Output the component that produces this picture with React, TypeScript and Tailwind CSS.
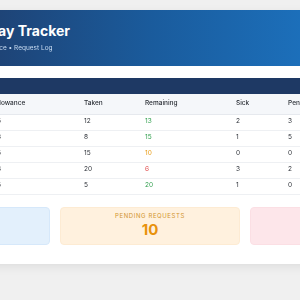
import React from 'react';

type Row = {
  name: string;
  allowance: number;
  taken: number;
  remaining: number;
  sick: number;
  pending: number;
  status: string;
};

const rows: Row[] = [
  { name: 'Sarah Johnson', allowance: 25, taken: 12, remaining: 13, sick: 2, pending: 3, status: 'Active' },
  { name: 'Michael Chen', allowance: 23, taken: 8, remaining: 15, sick: 1, pending: 5, status: 'Active' },
  { name: 'Emma Williams', allowance: 25, taken: 15, remaining: 10, sick: 0, pending: 0, status: 'Active' },
  { name: 'James Brown', allowance: 26, taken: 20, remaining: 6, sick: 3, pending: 2, status: 'Low' },
  { name: 'Olivia Davis', allowance: 25, taken: 5, remaining: 20, sick: 1, pending: 0, status: 'Active' },
];

function remainingColor(n: number) {
  if (n <= 6) return 'text-[#e04848]';
  if (n <= 10) return 'text-[#e89a12]';
  return 'text-[#2f9e4c]';
}

export default function App() {
  return (
    <div
      className="min-h-screen bg-[#f0f0f0] pt-[10px] overflow-hidden flex justify-center antialiased"
      style={{ fontFamily: 'Inter, "Noto Sans", sans-serif' }}
    >
      <div className="w-[600px] shrink-0 self-start bg-white rounded-[6px] overflow-hidden shadow-[0_3px_10px_rgba(0,0,0,0.08)]">
        {/* header */}
        <header className="h-[56px] pl-[4px] flex flex-col justify-center gap-[6px] bg-[linear-gradient(90deg,#1d2d5a_0%,#1e4477_25%,#1a5b9c_50%,#1c6fba_75%,#2083d4_100%)]">
          <h1 className="text-[14px] font-bold leading-none text-white">Annual Leave &amp; Holiday Tracker</h1>
          <p className="will-change-transform text-[6.5px] leading-[8px] text-[#c9dcf2]">
            Track team holidays, leave, sick days &amp; allowance • Request Log
          </p>
        </header>

        <div className="px-[10px] pt-[12px] pb-[19px]">
          <div className="h-[16px] bg-[#1e3964]" />

          <div className="will-change-transform">
            <table className="w-full table-fixed border-collapse text-[6.5px] text-[#2b2f36]">
              <colgroup>
                <col className="w-[127px]" />
                <col className="w-[91px]" />
                <col className="w-[61px]" />
                <col className="w-[91px]" />
                <col className="w-[52px]" />
                <col className="w-[70px]" />
                <col className="w-[88px]" />
              </colgroup>
              <thead>
                <tr className="h-[20px] bg-[#f5f7fa] border-b border-[#e6e9ee]">
                  <th className="pl-[6px] pt-[1px] text-left font-medium">Employee</th>
                  <th className="pl-[6px] pt-[1px] text-left font-medium">Allowance</th>
                  <th className="pl-[6px] pt-[1px] text-left font-medium">Taken</th>
                  <th className="pl-[6px] pt-[1px] text-left font-medium">Remaining</th>
                  <th className="pl-[6px] pt-[1px] text-left font-medium">Sick</th>
                  <th className="pl-[6px] pt-[1px] text-left font-medium">Pending</th>
                  <th className="pl-[6px] pt-[1px] text-left font-medium">Status</th>
                </tr>
              </thead>
              <tbody>
                {rows.map((r) => (
                  <tr key={r.name} className="h-[16px] border-b border-[#eef0f3]">
                    <td className="pl-[6px]">{r.name}</td>
                    <td className="pl-[6px]">{r.allowance}</td>
                    <td className="pl-[6px]">{r.taken}</td>
                    <td className={`pl-[6px] ${remainingColor(r.remaining)}`}>{r.remaining}</td>
                    <td className="pl-[6px]">{r.sick}</td>
                    <td className="pl-[6px]">{r.pending}</td>
                    <td className="pl-[6px]">{r.status}</td>
                  </tr>
                ))}
              </tbody>
            </table>
          </div>

          <div className="grid grid-cols-3 gap-[10px] mt-[12px] mx-[10px]">
            <div className="h-[38px] pt-[4px] rounded-[4px] bg-[#e3f0fc] border border-[#d6e8fa] flex flex-col items-center">
              <span className="text-[6px] leading-[7px] tracking-[0.6px] uppercase text-[#4a87c8]">Total Employees</span>
              <span className="text-[15px] font-bold leading-none mt-[3px] text-[#2b78c5]">5</span>
            </div>
            <div className="h-[38px] pt-[4px] rounded-[4px] bg-[#fff1de] border border-[#fdebd3] flex flex-col items-center">
              <span className="text-[6px] leading-[7px] tracking-[0.6px] uppercase text-[#d2952e]">Pending Requests</span>
              <span className="text-[15px] font-bold leading-none mt-[3px] text-[#e8920c]">10</span>
            </div>
            <div className="h-[38px] pt-[4px] rounded-[4px] bg-[#fde6ea] border border-[#fbdfe4] flex flex-col items-center">
              <span className="text-[6px] leading-[7px] tracking-[0.6px] uppercase text-[#d5606e]">Sick Days</span>
              <span className="text-[15px] font-bold leading-none mt-[3px] text-[#e04848]">7</span>
            </div>
          </div>
        </div>
      </div>
    </div>
  );
}
